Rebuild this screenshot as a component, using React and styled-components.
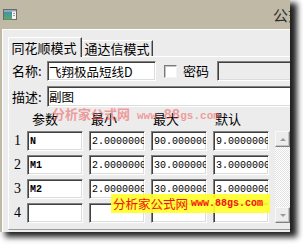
import React from "react";
import styled, { createGlobalStyle } from "styled-components";

const GlobalStyle = createGlobalStyle`
  html, body {
    margin: 0;
    padding: 0;
    background: #fff;
    overflow: hidden;
  }
  body {
    width: 303px;
    height: 244px;
    font-family: "Noto Sans CJK SC", "Noto Sans", sans-serif;
    color: #000;
  }
`;

const Window = styled.div`
  position: relative;
  width: 290px;
  height: 232px;
  background: #c0b9a6;
  box-shadow: 6px 4px 6px 1px rgba(0, 0, 0, 0.88);
  display: flex;
  flex-direction: column;
  overflow: hidden;
`;

const TitleBar = styled.div`
  height: 29px;
  flex-shrink: 0;
  display: flex;
  align-items: center;
  padding-left: 3px;
`;

const TitleText = styled.span`
  width: 17px;
  margin-left: 256px;
  overflow: hidden;
  font-size: 15px;
  line-height: 16px;
  color: #2e2e2e;
  white-space: nowrap;
`;

const Body = styled.div`
  flex: 1;
  margin-left: 2px;
  background: #ececec;
  box-shadow: inset 1px 1px #fff;
  padding: 8px 0 0 6px;
  display: flex;
  flex-direction: column;
`;

const TabStrip = styled.div`
  display: flex;
  align-items: flex-end;
  height: 20px;
  margin-bottom: -1px;
  position: relative;
  z-index: 1;
`;

const Tab = styled.div`
  box-sizing: border-box;
  width: ${(p) => (p.$active ? 74 : 71)}px;
  height: ${(p) => (p.$active ? 20 : 16)}px;
  margin-bottom: ${(p) => (p.$active ? 0 : 1)}px;
  background: #ececec;
  border-top: 1px solid #fff;
  border-left: ${(p) => (p.$active ? "1px solid #fff" : "none")};
  border-right: 1px solid #404040;
  box-shadow: inset -1px 0 #a0a0a0;
  font-size: 13px;
  line-height: ${(p) => (p.$active ? 19 : 15)}px;
  text-align: center;
  white-space: nowrap;
  padding-right: ${(p) => (p.$active ? 2 : 0)}px;
`;

const Panel = styled.div`
  box-sizing: border-box;
  width: 300px;
  height: 174px;
  border-top: 1px solid #fff;
  border-left: 1px solid #fff;
  border-bottom: 1px solid #9a9a9a;
  padding: 4px 0 0 3px;
  display: flex;
  flex-direction: column;
`;

const FormRow = styled.div`
  display: flex;
  align-items: center;
  height: ${(p) => p.$h || 20}px;
  margin-top: ${(p) => p.$mt || 0}px;
`;

const Label = styled.span`
  width: ${(p) => p.$w || 35}px;
  flex-shrink: 0;
  font-size: 13px;
  line-height: 16px;
  white-space: nowrap;
  margin-left: ${(p) => p.$ml || 0}px;
`;

const Field = styled.input`
  box-sizing: border-box;
  width: ${(p) => p.$w}px;
  height: ${(p) => p.$h || 20}px;
  flex-shrink: 0;
  margin: 0;
  margin-left: ${(p) => p.$ml || 0}px;
  padding: 0 0 0 ${(p) => p.$pl ?? 1}px;
  border: 1px solid;
  border-color: #808080 #fff #fff #808080;
  box-shadow: inset 1px 1px #404040, inset -1px -1px #dcdcdc;
  background: ${(p) => (p.disabled ? "#ececec" : "#fff")};
  font-family: ${(p) =>
    p.$mono
      ? '"Liberation Mono", "DejaVu Sans Mono", monospace'
      : '"Noto Sans CJK SC", "Noto Sans", sans-serif'};
  font-size: ${(p) => (p.$mono ? 10 : 12.5)}px;
  font-weight: ${(p) => (p.$bold ? 700 : 400)};
  color: #000;
  outline: none;
`;

const Check = styled.span`
  box-sizing: border-box;
  width: 13px;
  height: 13px;
  margin-left: 8px;
  flex-shrink: 0;
  background: #fff;
  border: 1px solid;
  border-color: #7a7a7a #f4f4f4 #f4f4f4 #7a7a7a;
  box-shadow: inset 1px 1px #c4c4c4;
`;

const Grid = styled.div`
  display: grid;
  grid-template-columns: 10px repeat(4, 56px) 15px;
  grid-template-rows: repeat(5, 20px);
  column-gap: 6px;
  row-gap: 4px;
  margin-left: -1px;
`;

const HeadCell = styled.span`
  align-self: end;
  font-size: 13px;
  line-height: 16px;
  padding-left: ${(p) => p.$pl || 2}px;
  white-space: nowrap;
`;

const RowNum = styled.span`
  font-family: "Liberation Serif", "DejaVu Serif", serif;
  font-size: 14px;
  line-height: 20px;
  text-align: center;
  padding-left: 3px;
`;

const ScrollBar = styled.div`
  grid-column: 6;
  grid-row: 2 / 6;
  display: flex;
  flex-direction: column;
  justify-content: space-between;
  background: repeating-conic-gradient(#fff 0 25%, #e2e2e2 0 50%) 0 0 / 2px 2px;
`;

const ScrollBtn = styled.div`
  box-sizing: border-box;
  height: 16px;
  background: #ececec;
  border: 1px solid;
  border-color: #f8f8f8 #808080 #808080 #f8f8f8;
  box-shadow: inset -1px -1px #c4c4c4;
  display: flex;
  align-items: center;
  justify-content: center;

  &::after {
    content: "";
    width: 0;
    height: 0;
    border-left: 3px solid transparent;
    border-right: 3px solid transparent;
    ${(p) =>
      p.$down
        ? "border-top: 3px solid #9a9a9a;"
        : "border-bottom: 3px solid #9a9a9a;"}
  }
`;

const Watermark = styled.div`
  position: absolute;
  left: 52px;
  top: 105px;
  display: flex;
  align-items: baseline;
  white-space: nowrap;
  color: rgba(240, 84, 84, 0.55);
  pointer-events: none;
`;

const WmCn = styled.span`
  font-size: 13px;
  font-weight: 700;
  line-height: 17px;
`;

const WmUrl = styled.span`
  margin-left: 7px;
  font-family: "Liberation Mono", "DejaVu Sans Mono", monospace;
  font-size: 11px;
  font-weight: 700;

  b {
    font-size: 14px;
  }
`;

const Badge = styled.div`
  position: absolute;
  left: 111px;
  top: 194px;
  width: 159px;
  height: 19px;
  box-sizing: border-box;
  padding-left: 2px;
  background: rgba(255, 255, 40, 0.9);
  display: flex;
  align-items: center;
  white-space: nowrap;
  color: #f41010;
`;

const BadgeCn = styled.span`
  font-size: 12.5px;
  line-height: 15px;
`;

const BadgeUrl = styled.span`
  margin-left: 3px;
  font-family: "Liberation Mono", "DejaVu Sans Mono", monospace;
  font-size: 10px;
  font-weight: 700;
`;

function AppIcon() {
  return (
    <svg width="14" height="11" viewBox="0 0 14 11">
      <defs>
        <linearGradient id="ic" x1="0" y1="0" x2="0" y2="1">
          <stop offset="0" stopColor="#3f8fae" />
          <stop offset="1" stopColor="#5fa86a" />
        </linearGradient>
      </defs>
      <rect x="0.5" y="0.5" width="13" height="10" fill="#f4f4f4" stroke="#6a6a6a" />
      <rect x="1" y="1" width="12" height="1.5" fill="#9aa6b8" />
      <rect x="1" y="2.5" width="8" height="8" fill="url(#ic)" />
      <rect x="10" y="4" width="2" height="1" fill="#9a9a9a" />
      <rect x="10" y="6" width="2" height="1" fill="#9a9a9a" />
    </svg>
  );
}

const params = [
  ["N", "2.00000000", "90.0000000", "9.00000000"],
  ["M1", "2.00000000", "30.0000000", "3.00000000"],
  ["M2", "2.00000000", "30.0000000", "3.00000000"],
  ["", "", "", ""],
];

export default function App() {
  return (
    <>
      <GlobalStyle />
      <Window>
        <TitleBar>
          <AppIcon />
          <TitleText>公式</TitleText>
        </TitleBar>
        <Body>
          <TabStrip>
            <Tab $active>同花顺模式</Tab>
            <Tab>通达信模式</Tab>
          </TabStrip>
          <Panel>
            <FormRow>
              <Label>名称:</Label>
              <Field $w={109} readOnly defaultValue="飞翔极品短线D" />
              <Check />
              <Label $w={34} $ml={6}>密码</Label>
              <Field $w={90} disabled defaultValue="" />
            </FormRow>
            <FormRow $h={21} $mt={5}>
              <Label>描述:</Label>
              <Field $w={260} $h={21} readOnly defaultValue="副图" />
            </FormRow>
            <Grid>
              <span />
              <HeadCell $pl={5}>参数</HeadCell>
              <HeadCell>最小</HeadCell>
              <HeadCell>最大</HeadCell>
              <HeadCell>默认</HeadCell>
              <span />
              {params.map((row, i) => (
                <React.Fragment key={i}>
                  <RowNum style={{ gridRow: i + 2, gridColumn: 1 }}>{i + 1}</RowNum>
                  {row.map((v, j) => (
                    <Field
                      key={j}
                      $w={56}
                      $mono
                      $bold={j === 0}
                      $pl={2}
                      readOnly
                      defaultValue={v}
                      style={{ gridRow: i + 2, gridColumn: j + 2 }}
                    />
                  ))}
                </React.Fragment>
              ))}
              <ScrollBar>
                <ScrollBtn />
                <ScrollBtn $down />
              </ScrollBar>
            </Grid>
          </Panel>
        </Body>
        <Watermark>
          <WmCn>分析家公式网</WmCn>
          <WmUrl>
            www.<b>88</b>gs.com
          </WmUrl>
        </Watermark>
        <Badge>
          <BadgeCn>分析家公式网</BadgeCn>
          <BadgeUrl>www.88gs.com</BadgeUrl>
        </Badge>
      </Window>
    </>
  );
}
